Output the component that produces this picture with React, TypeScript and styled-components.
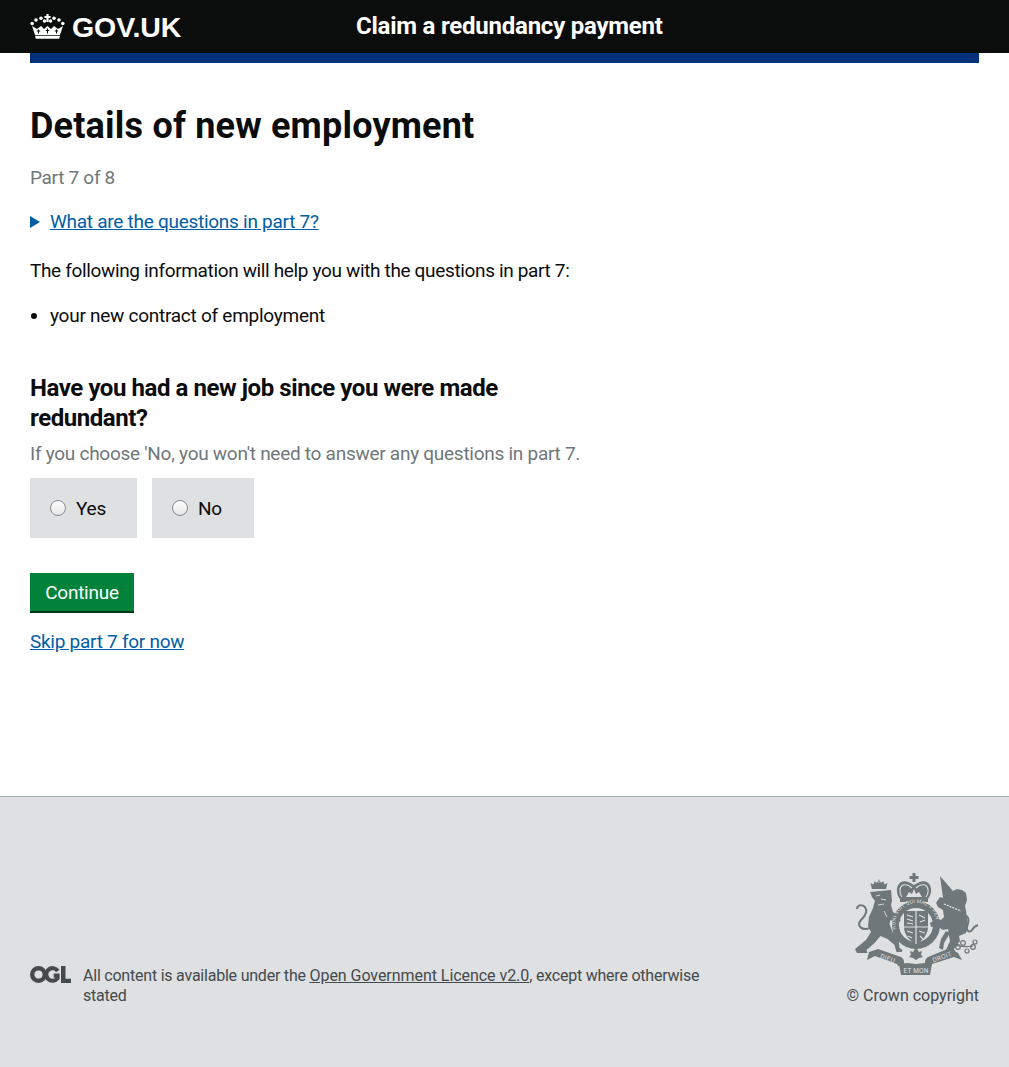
import React from "react";
import styled, { createGlobalStyle } from "styled-components";

const Global = createGlobalStyle`
  html, body { margin: 0; padding: 0; background: #fff; }
  body { font-family: Roboto, "Noto Sans", sans-serif; color: #0b0c0c; }
  * { box-sizing: border-box; }
`;
const Page = styled.div`
  min-height: 1067px;
  display: flex;
  flex-direction: column;
`;
const Header = styled.header`
  height: 53px;
  background: #0b0c0c;
  padding: 0 30px;
  display: flex;
  align-items: center;
`;
const Logo = styled.a`
  display: flex;
  align-items: center;
  gap: 7px;
  color: #fff;
  font-size: 28.5px;
  line-height: 30px;
  font-weight: 700;
  font-family: "Liberation Sans", sans-serif;
  letter-spacing: -0.1px;
  width: 326px;
`;
const ServiceName = styled.div`
  color: #fff;
  font-size: 24px;
  line-height: 28px;
  margin-top: -2px;
  font-weight: 700;
  letter-spacing: -0.23px;
`;
const BlueBar = styled.div`
  height: 10px;
  margin: 0 30px;
  background: #00317a;
`;
const Main = styled.main`
  padding: 0 30px;
  flex: 1;
`;
const Title = styled.h1`
  margin: 41px 0 0;
  font-size: 36px;
  line-height: 45px;
  font-weight: 700;
  letter-spacing: 0.2px;
`;
const Meta = styled.p`
  margin: 16px 0 0;
  font-size: 19px;
  line-height: 25px;
  color: #6f777b;
  letter-spacing: -0.3px;
`;
const Details = styled.div`
  margin-top: 19px;
  display: flex;
  align-items: center;
  gap: 10px;
  font-size: 19px;
  line-height: 25px;
`;
const Arrow = styled.span`
  width: 0;
  height: 0;
  border-left: 10px solid #005ea5;
  border-top: 6px solid transparent;
  border-bottom: 6px solid transparent;
`;
const Link = styled.a`
  color: #005ea5;
  text-decoration: underline;
  font-size: 19px;
  line-height: 25px;
  letter-spacing: -0.27px;
`;
const Body = styled.p`
  margin: 24px 0 0;
  font-size: 19px;
  line-height: 25px;
  letter-spacing: -0.35px;
`;
const List = styled.ul`
  margin: 20px 0 0;
  padding: 0 0 0 20px;
  font-size: 19px;
  line-height: 25px;
  letter-spacing: -0.26px;
`;
const Question = styled.h2`
  margin: 45px 0 0;
  width: 520px;
  font-size: 24px;
  line-height: 30px;
  font-weight: 700;
  letter-spacing: -0.43px;
`;
const Hint = styled.p`
  margin: 8px 0 0;
  font-size: 19px;
  line-height: 25px;
  color: #6f777b;
  letter-spacing: -0.27px;
`;
const Radios = styled.div`
  margin-top: 12px;
  display: flex;
  gap: 15px;
`;
const RadioBox = styled.label<{ $width: number }>`
  width: ${(p) => p.$width}px;
  height: 60px;
  padding-left: 20px;
  background: #dee0e2;
  display: flex;
  align-items: center;
  gap: 10px;
  font-size: 19px;
  letter-spacing: -0.2px;
`;
const Radio = styled.span`
  width: 16px;
  height: 16px;
  border-radius: 50%;
  border: 1px solid #8a8a8a;
  background: linear-gradient(#fdfdfd, #f0f0f0 60%, #e4e4e4);
`;
const Button = styled.button`
  display: block;
  margin-top: 35px;
  width: 104px;
  height: 40px;
  border: 0;
  border-bottom: 2px solid #003618;
  background: #00823b;
  color: #fff;
  font: inherit;
  font-size: 19px;
  letter-spacing: -0.25px;
  padding: 0;
`;
const Skip = styled.div`
  margin-top: 16px;
`;
const Footer = styled.footer`
  height: 271px;
  border-top: 1px solid #a1acb2;
  background: #dee0e2;
  padding: 0 30px 61px;
  display: flex;
  align-items: flex-end;
  justify-content: space-between;
  color: #454a4c;
  font-size: 16px;
  line-height: 20px;
`;
const Licence = styled.div`
  display: flex;
  align-items: flex-start;
  gap: 12px;
  width: 690px;
`;
const OglMark = styled.svg`
  flex: none;
  width: 41px;
  height: 17px;
`;
const LicenceText = styled.div`
  letter-spacing: -0.22px;
`;
const FooterLink = styled.a`
  color: #454a4c;
  text-decoration: underline;
  letter-spacing: -0.05px;
`;
const Crown = styled.div`
  display: flex;
  flex-direction: column;
  align-items: flex-end;
  gap: 10px;
`;

function CrownIcon() {
  const dots: [number, number][] = [[2.2,9.5],[6,6],[11,4.2],[24,4.2],[29,6],[32.8,9.5],[14.5,7],[20.5,7]];
  return (
    <svg width="35" height="25" viewBox="0 0 35 25" aria-hidden>
      <path d="M16.4 0h2.2v2h2v2h-2v4h-2.2V4h-2V2h2z" fill="#fff" />
      {dots.map(([x, y], i) => <circle key={i} cx={x} cy={y} r="1.8" fill="#fff" />)}
      <path d="M2 12l3 9h25l3-9-5 3-4-3-3 3-3.500-3-3.500 3-3-3-4 3z" fill="#fff" />
      <path d="M8.500 15.500v4M6.800 17h3.400M17.500 14.500v5M15.800 16.500h3.400M26.500 15.500v4M24.800 17h3.400" stroke="#0b0c0c" strokeWidth="1" />
      <path d="M5 21.800h25l-.8 3H5.800z" fill="#fff" />
    </svg>
  );
}

function OglIcon() {
  return (
    <OglMark viewBox="0 0 41 17" aria-hidden>
      <circle cx="8.500" cy="8.500" r="6.300" fill="none" stroke="#454a4c" strokeWidth="4.400" />
      <path d="M27.800 5A6.300 6.300 0 1 0 27.500 12.300V9.500h-3.800" fill="none" stroke="#454a4c" strokeWidth="4.200" />
      <path d="M31 0h4.500v12.800H41V17h-10z" fill="#454a4c" />
    </OglMark>
  );
}

function Crest() {
  const c = "#6f777b";
  const bg = "#dee0e2";
  const motto = { fontSize: 6.5, fill: bg, fontFamily: "Roboto, sans-serif", letterSpacing: 0.4 };
  return (
    <svg width="125" height="103" viewBox="0 0 125 103" aria-hidden>
      <defs>
        <path id="garter" d="M43 58a20.500 20.500 0 1 1 38 0" />
      </defs>
      <path d="M18 16l-1.500-6 3 1.500 1-3.500 2.500 2 2-4 2 4 2.500-2 1 3.500 3-1.500-1.500 6z" fill={c} />
      <path d="M19 9.500l3-1.500M25 5v5M31 9.500l-3-1.500" stroke={bg} strokeWidth=".7" />
      <path d="M16 19l21-2 1 11-1 4 2 7 7 5 .5 4-3 2-7-3-1 4 3 8 6 6 1 10 3 2-1 2h-5l-2-7-7-6-7-3-6 7-8 7 1 3H3l-2-4 11-9 5-8-3-6 1-9 4-9 2-7-3-4z" fill={c} />
      <path d="M22 23l4-1M27 26l5 1M24 32l6-1M30 38l3 6" stroke={bg} strokeWidth=".9" />
      <path d="M16 55C8 58 2 53 7 47c5-5 7-9 4-13-3-3-8-2-8 2" fill="none" stroke={c} strokeWidth="2" />
      <path d="M58.500 0h3v3h3v3h-3v3h-3V6h-3V3h3z" fill={c} />
      <path d="M47 27c-5-5-6-14 0-18 4-2 8 0 13 3 5-3 9-5 13-3 6 4 5 13 0 18z" fill={c} />
      <path d="M48 24c-3-4-3-10 1-12 3-1 7 1 9 3M72 24c3-4 3-10-1-12-3-1-7 1-9 3" fill="none" stroke={bg} strokeWidth="1.100" />
      <path d="M52 24l3-5 3 2 2-5 2 5 3-2 3 5z" fill={bg} />
      <path d="M46 26h28v3H46z" fill={c} />
      <circle cx="62" cy="52" r="20.500" fill="none" stroke={c} strokeWidth="7" />
      <text {...motto} fontSize={5} letterSpacing={0.3}>
        <textPath href="#garter" startOffset="2">HONI SOIT QUI MAL Y PENSE</textPath>
      </text>
      <path d="M50 38h24v16c0 8-6 14-12 17-6-3-12-9-12-17z" fill={c} />
      <path d="M62 38v33M50 54h24" stroke={bg} strokeWidth="1.200" />
      <path d="M53 42l6 2M53 46l6 2M53 50l6 1M65 42l6 3M66 49l5-2M53 58l6 2M54 63l4 2M65 58l6 2M66 63l3 3" stroke={bg} strokeWidth="1.100" />
      <path d="M86 3l13 15 4-2 5 1 4 3 1 7-2 6 1 5 1 8 1 8-2 6-7 3 1 5-6 8 1 2-3 1-2-2-4 0 4-9-1-5-1-7-5 1-6-4-6 1-1-4 7-4 4 1 3-3-1-7-5-3-2-4 4-6 3 1z" fill={c} />
      <path d="M90 31l17 7" stroke={bg} strokeWidth="1.300" strokeDasharray="2 1" />
      <path d="M110 42c7 2 4 8 3 12-1 4 3 6 5 3 1-2 3-4 6-5" fill="none" stroke={c} strokeWidth="2" />
      <path d="M97 66c2 5 5 7 8 7 5 1 9 1 14 0" fill="none" stroke={c} strokeWidth="1.200" />
      <circle cx="104" cy="74" r="2.300" fill="none" stroke={c} strokeWidth="1.200" />
      <circle cx="109" cy="70" r="2.300" fill="none" stroke={c} strokeWidth="1.200" />
      <circle cx="113" cy="78" r="2" fill="none" stroke={c} strokeWidth="1.200" />
      <circle cx="119" cy="74" r="2.300" fill="none" stroke={c} strokeWidth="1.200" />
      <circle cx="121" cy="69" r="2" fill="none" stroke={c} strokeWidth="1.200" />
      <path d="M96 60l-6 10-1 7-4-2 2-9 5-8z" fill={c} />
      <path d="M62 74l3 5 3-1-1 4 2 2-4 1-3 2-3-2-4-1 2-2-1-4 3 1z" fill={c} />
      <path d="M15 79l9-3 23 8c2 1 3 3 3 5v3l-6 1-1-2-22-8-8 4z" fill={c} />
      <path d="M104 80l-8-5-22 9c-2 1-3 3-3 5v3l6 1 1-2 22-7 8 3z" fill={c} />
      <path d="M45 91l8-1 9 1 9-1 7 1-2 11H47z" fill={c} />
      <text {...motto} x="33" y="87.500" textAnchor="middle" transform="rotate(20 33 87.500)">DIEU</text>
      <text {...motto} x="62" y="100" textAnchor="middle" letterSpacing={0.2}>ET MON</text>
      <text {...motto} x="89" y="86" textAnchor="middle" transform="rotate(-20 89 86)">DROIT</text>
    </svg>
  );
}

export default function App() {
  return (
    <Page>
      <Global />
      <Header>
        <Logo><CrownIcon />GOV.UK</Logo>
        <ServiceName>Claim a redundancy payment</ServiceName>
      </Header>
      <BlueBar />
      <Main>
        <Title>Details of new employment</Title>
        <Meta>Part 7 of 8</Meta>
        <Details><Arrow /><Link>What are the questions in part 7?</Link></Details>
        <Body>The following information will help you with the questions in part 7:</Body>
        <List><li>your new contract of employment</li></List>
        <Question>Have you had a new job since you were made redundant?</Question>
        <Hint>If you choose 'No, you won't need to answer any questions in part 7.</Hint>
        <Radios>
          <RadioBox $width={107}><Radio />Yes</RadioBox>
          <RadioBox $width={102}><Radio />No</RadioBox>
        </Radios>
        <Button>Continue</Button>
        <Skip><Link>Skip part 7 for now</Link></Skip>
      </Main>
      <Footer>
        <Licence>
          <OglIcon />
          <LicenceText>All content is available under the <FooterLink>Open Government Licence v2.0</FooterLink>, except where otherwise stated</LicenceText>
        </Licence>
        <Crown>
          <Crest />
          <span>© Crown copyright</span>
        </Crown>
      </Footer>
    </Page>
  );
}
